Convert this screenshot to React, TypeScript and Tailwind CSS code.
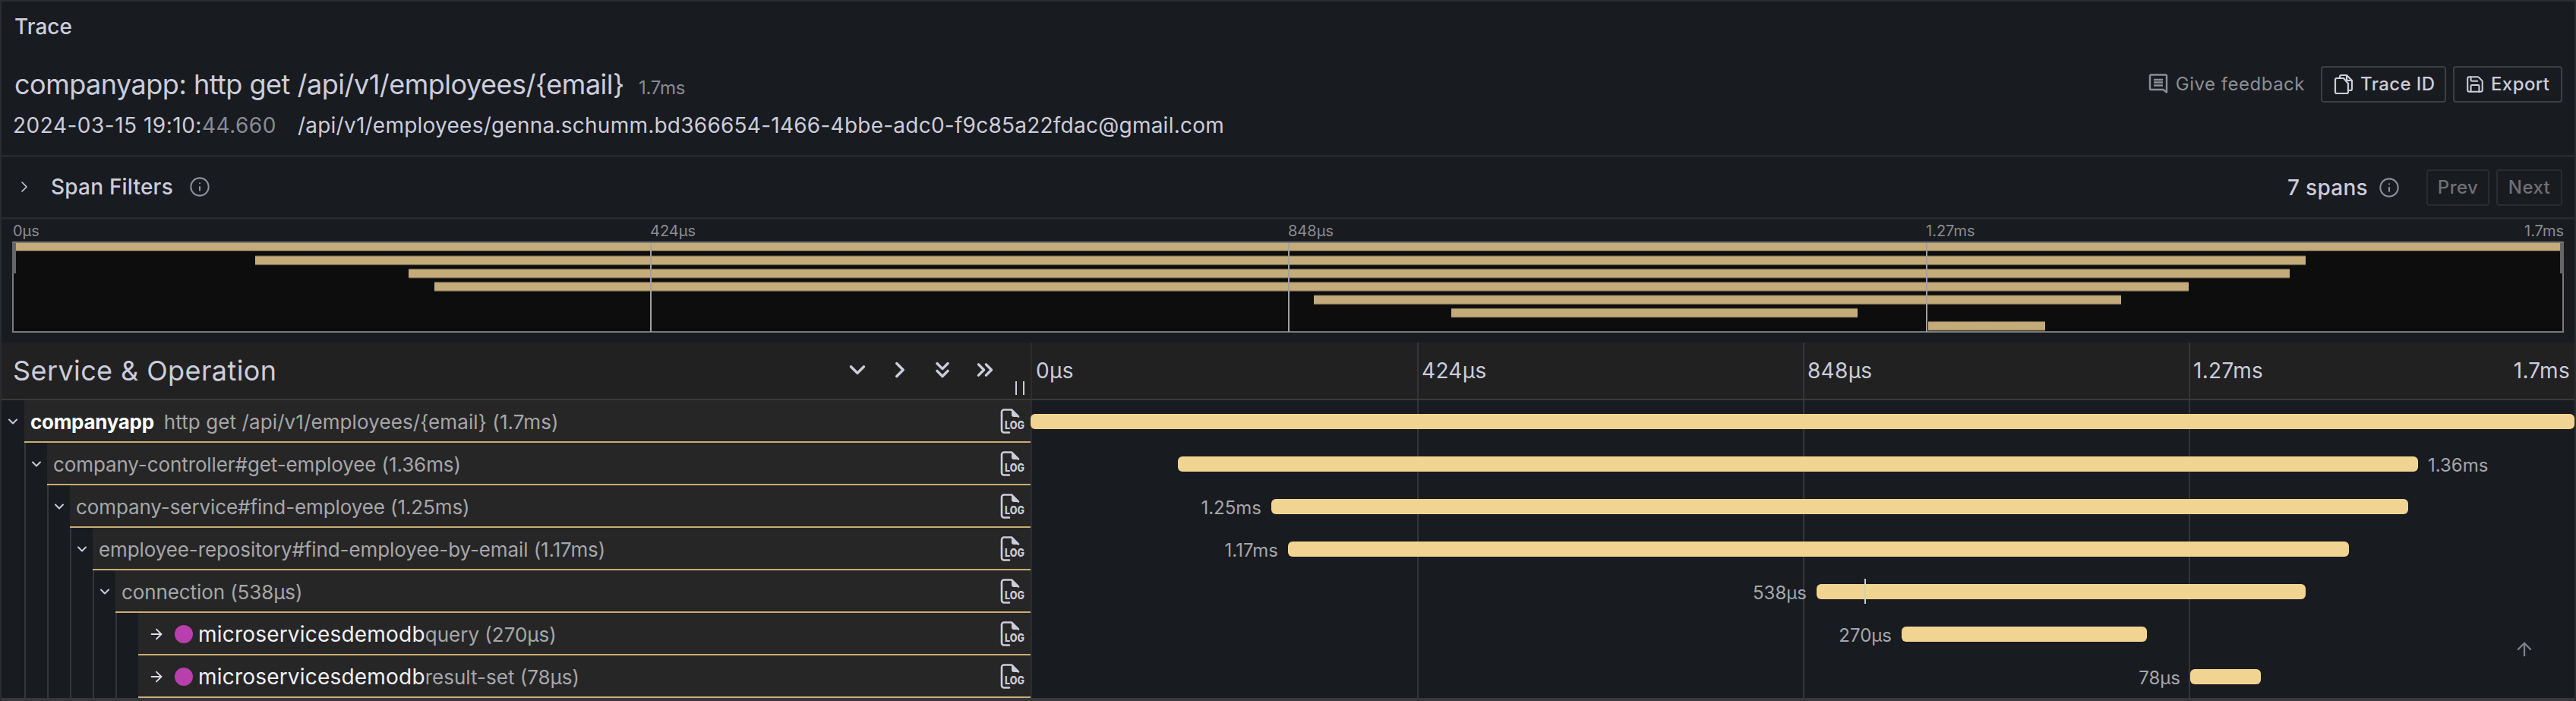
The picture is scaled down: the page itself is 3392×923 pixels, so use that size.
import { ChevronDown, ChevronRight, ChevronsDown, ChevronsRight, ArrowRight, ArrowUp, Info, Save } from "lucide-react";

const FONT = "font-['Inter','Noto_Sans',sans-serif]";

type Span = {
  level: number;
  service?: string;
  leaf?: boolean;
  bold?: boolean;
  name: string;
  start: number;
  width: number;
  label: string;
  labelSide: "left" | "right" | "none";
  marker?: number;
};

const spans: Span[] = [
  { level: 0, service: "companyapp", bold: true, name: "http get /api/v1/employees/{email} (1.7ms)", start: 0, width: 2033, label: "", labelSide: "none" },
  { level: 1, name: "company-controller#get-employee (1.36ms)", start: 194, width: 1633, label: "1.36ms", labelSide: "right" },
  { level: 2, name: "company-service#find-employee (1.25ms)", start: 317, width: 1497, label: "1.25ms", labelSide: "left" },
  { level: 3, name: "employee-repository#find-employee-by-email (1.17ms)", start: 339, width: 1397, label: "1.17ms", labelSide: "left" },
  { level: 4, name: "connection (538µs)", start: 1035, width: 644, label: "538µs", labelSide: "left", marker: 63 },
  { level: 5, leaf: true, service: "microservicesdemodb", name: "query (270µs)", start: 1147, width: 323, label: "270µs", labelSide: "left" },
  { level: 5, leaf: true, service: "microservicesdemodb", name: "result-set (78µs)", start: 1527, width: 93, label: "78µs", labelSide: "left" },
];

const miniBars = [
  [336, 3036],
  [538, 3015],
  [572, 2882],
  [1730, 2793],
  [1911, 2446],
  [2539, 2693],
];

function LogIcon() {
  return (
    <svg width="40" height="34" viewBox="0 0 40 34" fill="none" className="shrink-0">
      <path
        d="M13 31.5H6a3 3 0 0 1-3-3V4.5a3 3 0 0 1 3-3h10l9 9"
        stroke="#ccccdc"
        strokeWidth="2.6"
        strokeLinecap="round"
        strokeLinejoin="round"
      />
      <path d="M16 2.5l9 8.5h-6a3 3 0 0 1-3-3z" fill="#ccccdc" />
      <text x="7" y="27" fill="#ccccdc" fontSize="14" fontWeight="800" fontFamily="Inter" textLength="26" lengthAdjust="spacingAndGlyphs">
        LOG
      </text>
    </svg>
  );
}

function FeedbackIcon() {
  return (
    <svg width="28" height="28" viewBox="0 0 28 28" fill="none" stroke="#8e8e96" strokeWidth="2.4">
      <path d="M4.5 1.5h19a1.5 1.5 0 0 1 1.5 1.5v21.5l-4.5-3.5h-16A1.5 1.5 0 0 1 3 19.5V3a1.5 1.5 0 0 1 1.5-1.5z" strokeLinejoin="round" />
      <path d="M8 8h12M8 11.5h12M8 15.5h12" />
    </svg>
  );
}

function CopyIcon() {
  return (
    <svg width="28" height="28" viewBox="0 0 28 28" fill="none" stroke="#ccccdc" strokeWidth="2.2" strokeLinejoin="round">
      <path d="M9 6V4a2 2 0 0 1 2-2h7l7 7v11a2 2 0 0 1-2 2h-3" />
      <path d="M18 2v5a2 2 0 0 0 2 2h5" />
      <path d="M5 6h9l6 7v11a2 2 0 0 1-2 2H5a2 2 0 0 1-2-2V8a2 2 0 0 1 2-2z" />
    </svg>
  );
}

function Header() {
  return (
    <div className="h-[205px] shrink-0 border-b-[3px] border-[#26282d] relative">
      <div className="pl-[17px] pt-[17px] text-[28px] leading-[32px] font-medium text-[#ccccdc]">Trace</div>
      <div className="flex items-center justify-between pl-[17px] pr-[16px] mt-[36px] h-[48px]">
        <div className="flex items-baseline gap-[19px]">
          <span className="text-[36px] leading-[44px] tracking-[-0.5px] text-[#ccccdc]">companyapp: http get /api/v1/employees/{"{email}"}</span>
          <span className="text-[24px] tracking-[-0.2px] text-[#ccccdca6]">1.7ms</span>
        </div>
        <div className="flex items-center">
          <div className="flex items-center gap-[9px] mr-[21px] text-[24px] tracking-[0.5px] text-[#8e8e96]">
            <FeedbackIcon />
            Give feedback
          </div>
          <div className="flex items-center gap-[8px] w-[165px] h-[48px] pl-[14px] mr-[9px] border-2 border-[#3d3f45] rounded-[4px] text-[24px] tracking-[0.4px] font-medium text-[#ccccdc]">
            <CopyIcon />
            Trace ID
          </div>
          <div className="flex items-center gap-[8px] w-[144px] h-[48px] pl-[14px] border-2 border-[#3d3f45] rounded-[4px] text-[24px] tracking-[0.4px] font-medium text-[#ccccdc]">
            <Save size={26} strokeWidth={1.9} />
            Export
          </div>
        </div>
      </div>
      <div className="flex items-center pl-[15px] mt-[10px] text-[28px] leading-[40px] tracking-[0.24px] text-[#ccccdc]">
        <span className="tracking-[0.5px]">2024-03-15 19:10:</span>
        <span className="tracking-[0.5px] text-[#ccccdca6]">44.660</span>
        <span className="ml-[28px]">/api/v1/employees/genna.schumm.bd366654-1466-4bbe-adc0-f9c85a22fdac@gmail.com</span>
      </div>
    </div>
  );
}

function SpanFilters() {
  return (
    <div className="h-[82px] shrink-0 flex items-center border-b-[3px] border-[#26282d] pl-[18px] pr-[16px]">
      <div className="flex items-center -mt-[2px]">
        <ChevronRight size={24} strokeWidth={1.6} className="text-[#ccccdc]" />
        <span className="ml-[23px] text-[28px] tracking-[0.2px] font-medium text-[#ccccdc]">Span Filters</span>
        <Info size={28} strokeWidth={1.8} className="ml-[21px] text-[#ccccdca6]" />
      </div>
      <div className="ml-auto flex items-center">
        <span className="text-[28px] tracking-[0.3px] font-medium text-[#ccccdc]">7 spans</span>
        <Info size={28} strokeWidth={1.8} className="ml-[14px] text-[#ccccdca6]" />
        <div className="ml-[35px] flex items-center justify-center w-[83px] h-[48px] border-2 border-[#2a2c31] rounded-[4px] text-[24px] tracking-[0.4px] font-medium text-[#6f7077]">Prev</div>
        <div className="ml-[9px] flex items-center justify-center w-[87px] h-[48px] border-2 border-[#2a2c31] rounded-[4px] text-[24px] tracking-[0.4px] font-medium text-[#6f7077]">Next</div>
      </div>
    </div>
  );
}

function Minimap() {
  return (
    <div className="h-[162px] shrink-0 pl-[14px] pr-[14px] pt-[2px]">
      <div className="relative h-[26px] text-[20px] leading-[26px] text-[#8b8b90]">
        <span className="absolute left-[1px]">0µs</span>
        <span className="absolute left-[840px]">424µs</span>
        <span className="absolute left-[1680px]">848µs</span>
        <span className="absolute left-[2520px]">1.27ms</span>
        <span className="absolute right-[0px]">1.7ms</span>
      </div>
      <svg width="3362" height="121" viewBox="16 316 3362 121" className="block">
        <defs>
          <linearGradient id="minibar" x1="0" y1="0" x2="0" y2="1">
            <stop offset="0" stopColor="#3f3a2e" />
            <stop offset="0.14" stopColor="#c4ab7a" />
            <stop offset="0.86" stopColor="#c4ab7a" />
            <stop offset="1" stopColor="#3f3a2e" />
          </linearGradient>
        </defs>
        <rect x="17" y="318" width="3358" height="118" fill="#0d0d0d" stroke="#7a7a7a" strokeWidth="2" />
        <rect x="21" y="319" width="3350" height="10" fill="#c4ab7a" />
        <rect x="21" y="329" width="3350" height="1" fill="#3f3a2e" />
        {miniBars.map(([x1, x2], i) => (
          <rect key={i} x={x1} y={318 + (i + 1) * 17.3} width={x2 - x1} height={13} fill="url(#minibar)" />
        ))}
        <rect x="856" y="319" width="2" height="117" fill="#a0a0a0" />
        <rect x="1696" y="319" width="2" height="117" fill="#a0a0a0" />
        <rect x="2536" y="319" width="2" height="117" fill="#a0a0a0" />
        <rect x="16" y="319" width="5" height="40" fill="#666666" />
        <rect x="3371" y="319" width="5" height="40" fill="#666666" />
      </svg>
    </div>
  );
}

function TreeRow({ span }: { span: Span }) {
  return (
    <div className="flex h-[56px]">
      {Array.from({ length: span.level + 1 }).map((_, i) => (
        <div
          key={i}
          className={`w-[30px] shrink-0 flex items-center justify-center ${i > 0 ? "border-l-2 border-[#34363a]" : ""}`}
        >
          {i === span.level && !span.leaf && <ChevronDown size={20} strokeWidth={2.4} className="text-[#ccccdc]" />}
        </div>
      ))}
      <div className="flex-1 min-w-0 flex items-center bg-[#262626] border-b-2 border-[#c9ad74] pt-[2px] pr-[1px]">
        {span.leaf ? (
          <>
            <ArrowRight size={22} strokeWidth={2} className="ml-[13px] text-[#ddddea]" />
            <span className="ml-[13px] w-[24px] h-[24px] rounded-full bg-[#b83fad]" />
            <span className="ml-[7px] text-[28px] tracking-[0.2px] text-[#f0f0f6]">{span.service}</span>
            <span className="text-[26px] text-[#a6a6ab]">{span.name}</span>
          </>
        ) : span.service ? (
          <>
            <span className="ml-[8px] mr-[13px] text-[26px] tracking-[-0.3px] font-bold text-white">{span.service}</span>
            <span className="text-[26px] tracking-[0.1px] text-[#a6a6ab]">{span.name}</span>
          </>
        ) : (
          <span className="ml-[8px] text-[26px] tracking-[-0.1px] text-[#a6a6ab]">{span.name}</span>
        )}
        <div className="ml-auto">
          <LogIcon />
        </div>
      </div>
    </div>
  );
}

function BarRow({ span }: { span: Span }) {
  return (
    <div className="flex items-center h-[56px] relative">
      <div className="shrink-0 flex justify-end" style={{ width: span.start }}>
        {span.labelSide === "left" && (
          <span className="mr-[13px] mt-[4px] text-[24px] leading-[28px] text-[#a6a6ab] whitespace-nowrap">{span.label}</span>
        )}
      </div>
      <div className="relative h-[20px] shrink-0 bg-[#f2d492] rounded-[6px]" style={{ width: span.width }}>
        {span.marker !== undefined && (
          <span className="absolute top-[-7px] h-[33px] w-[2px] bg-[#cfcfcf]" style={{ left: span.marker }} />
        )}
      </div>
      {span.labelSide === "right" && (
        <span className="ml-[13px] mt-[4px] text-[24px] leading-[28px] text-[#a6a6ab] whitespace-nowrap">{span.label}</span>
      )}
    </div>
  );
}

export default function App() {
  return (
    <div className={`${FONT} w-[3392px] h-[923px] overflow-hidden bg-[#181b1f] border-t-2 border-l-2 border-r-2 border-[#2a2c31] flex flex-col`}>
      <Header />
      <SpanFilters />
      <Minimap />
      <div className="flex h-[76px] shrink-0 bg-[#212121] border-b-2 border-[#3a3a3a]">
        <div className="w-[1355px] shrink-0 flex items-center relative pl-[15px]">
          <span className="text-[36px] tracking-[0.4px] text-[#ccccdc]">Service &amp; Operation</span>
          <div className="ml-auto mr-[43px] flex items-center gap-[22px] text-[#ccccdc] -mt-[2px]">
            <ChevronDown size={34} strokeWidth={2.4} />
            <ChevronRight size={34} strokeWidth={2.4} />
            <ChevronsDown size={34} strokeWidth={2.4} />
            <ChevronsRight size={34} strokeWidth={2.4} />
          </div>
          <div className="absolute left-[1335px] bottom-[5px] h-[18px] w-[12px] border-x-2 border-[#ccccdc]" />
        </div>
        <div className="flex-1 relative border-l-2 border-[#2d2d2d] text-[28px] tracking-[0.3px] text-[#ccccdc] flex items-center">
          <div className="absolute top-0 bottom-0 left-[507px] w-[2px] bg-[#33353a]" />
          <div className="absolute top-0 bottom-0 left-[1015px] w-[2px] bg-[#33353a]" />
          <div className="absolute top-0 bottom-0 left-[1523px] w-[2px] bg-[#33353a]" />
          <span className="absolute left-[5px]">0µs</span>
          <span className="absolute left-[513px]">424µs</span>
          <span className="absolute left-[1021px]">848µs</span>
          <span className="absolute left-[1529px]">1.27ms</span>
          <span className="absolute right-[6px]">1.7ms</span>
        </div>
      </div>
      <div className="flex flex-1 min-h-0 border-b-4 border-[#35373b]">
        <div className="w-[1355px] shrink-0">
          {spans.map((span) => (
            <TreeRow key={span.name} span={span} />
          ))}
        </div>
        <div className="flex-1 relative">
          <div className="absolute top-0 bottom-0 left-0 w-[2px] bg-[#2d2d2d]" />
          <div className="absolute top-0 bottom-0 left-[509px] w-[2px] bg-[#33353a]" />
          <div className="absolute top-0 bottom-0 left-[1017px] w-[2px] bg-[#33353a]" />
          <div className="absolute top-0 bottom-0 left-[1525px] w-[2px] bg-[#33353a]" />
          <div className="relative">
            {spans.map((span) => (
              <BarRow key={span.name} span={span} />
            ))}
          </div>
          <ArrowUp size={28} strokeWidth={2} className="absolute left-[1953px] top-[314px] text-[#7f7f8c]" />
        </div>
      </div>
    </div>
  );
}
